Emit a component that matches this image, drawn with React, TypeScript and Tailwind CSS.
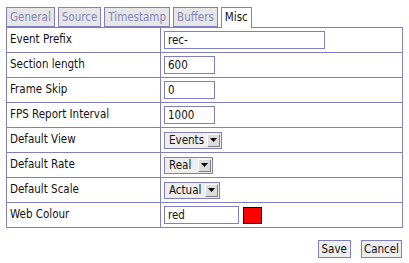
import React from "react";

const tabs = ["General", "Source", "Timestamp", "Buffers", "Misc"];

const Select = ({ value, width }: { value: string; width: string }) => (
  <div className={`flex h-[17px] items-stretch border border-[#8080c0] bg-[#eeeeee] ${width}`}>
    <span className="flex-1 pl-[4px] leading-[15px] text-[#111]">{value}</span>
    <span className="m-[1px] flex w-[13px] items-center justify-center border-t border-l border-t-white border-l-white border-r border-b border-r-[#808080] border-b-[#808080] bg-[#dcdcdc]">
      <svg width="7" height="4" viewBox="0 0 7 4">
        <path d="M0 0h7L3.5 4z" fill="#000" />
      </svg>
    </span>
  </div>
);

const TextBox = ({ value, width }: { value: string; width: string }) => (
  <div className={`h-[18px] border border-[#8080c0] bg-white pl-[3px] leading-[16px] text-[#111] ${width}`}>
    {value}
  </div>
);

const rows: { label: string; field: React.ReactNode }[] = [
  { label: "Event Prefix", field: <TextBox value="rec-" width="w-[161px]" /> },
  { label: "Section length", field: <TextBox value="600" width="w-[51px]" /> },
  { label: "Frame Skip", field: <TextBox value="0" width="w-[51px]" /> },
  { label: "FPS Report Interval", field: <TextBox value="1000" width="w-[51px]" /> },
  { label: "Default View", field: <Select value="Events" width="w-[58px]" /> },
  { label: "Default Rate", field: <Select value="Real" width="w-[49px]" /> },
  { label: "Default Scale", field: <Select value="Actual" width="w-[56px]" /> },
  {
    label: "Web Colour",
    field: (
      <div className="flex items-center gap-[4px]">
        <TextBox value="red" width="w-[75px]" />
        <div className="h-[17px] w-[19px] border border-black bg-[#ff0000]" />
      </div>
    ),
  },
];

export default function App() {
  return (
    <div
      className="h-[263px] w-[409px] bg-white pl-[6px] pt-[7px] text-[11.5px] text-[#111]"
      style={{ fontFamily: '"DejaVu Sans Condensed", "DejaVu Sans", sans-serif' }}
    >
      <div className="flex gap-[3px]">
        {tabs.map((t) =>
          t === "Misc" ? (
            <div
              key={t}
              className="relative z-10 -mb-[1px] h-[21px] border border-b-0 border-[#8080c0] bg-white px-[3px] leading-[19px] text-[#111]"
            >
              {t}
            </div>
          ) : (
            <div
              key={t}
              className="h-[20px] border border-[#8080c0] bg-[#e6e6e6] px-[3px] leading-[18px] text-[#8585b8]"
            >
              {t}
            </div>
          )
        )}
      </div>
      <div className="w-[397px] border-x border-t border-[#8080c0]">
        {rows.map((r) => (
          <div key={r.label} className="flex h-[25px] border-b border-[#8080c0]">
            <div className="flex w-[154px] items-center border-r border-[#8080c0] pl-[3px]">{r.label}</div>
            <div className="flex flex-1 items-center pl-[3px]">{r.field}</div>
          </div>
        ))}
      </div>
      <div className="flex w-[396px] justify-end gap-[10px] pt-[12px]">
        <button className="h-[18px] border border-[#8080c0] bg-[#eeeeee] px-[3px] leading-[16px] text-[#111]">Save</button>
        <button className="h-[18px] border border-[#8080c0] bg-[#eeeeee] px-[2px] leading-[16px] text-[#111]">Cancel</button>
      </div>
    </div>
  );
}
